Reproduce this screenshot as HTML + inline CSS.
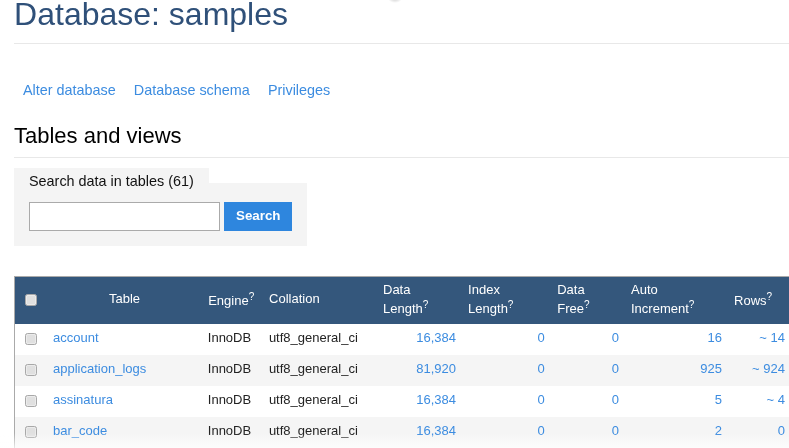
<!DOCTYPE html>
<html><head><meta charset="utf-8">
<style>
html,body{margin:0;padding:0;background:#fff;width:789px;height:448px;overflow:hidden;position:relative;font-family:"Liberation Sans",sans-serif;}
.a{position:absolute;white-space:pre;line-height:normal;}
.t32{font-size:32px;color:#2f5079;}
.lnk{font-size:14.4px;color:#3c8ce0;}
.h3{font-size:22px;color:#000;}
.rule{position:absolute;left:14px;right:0;height:1px;background:#e8e8e8;}
.fs{position:absolute;background:#f4f4f4;}
.th{font-size:13px;color:#fff;}
.td{font-size:13px;color:#222;}
.tl{font-size:13px;color:#3c8ce0;}
.r{text-align:right;}
.sup{font-size:10px;position:relative;top:-5px;}
.cb{position:absolute;width:10px;height:10px;border:1px solid #a8a8a8;border-radius:2.5px;background:#e0e0e0;box-shadow:inset 0 0 0 1px rgba(255,255,255,.35);}
.row{position:absolute;left:15px;right:0;height:31px;}
</style></head><body><div id="wrap" style="position:absolute;left:0;top:0;width:789px;height:448px;will-change:transform">
<div class="a t32" style="left:14.1px;top:-4px">Database: samples</div>
<div class="rule" style="top:43px"></div>

<div class="a lnk" style="left:23px;top:82px">Alter database</div>
<div class="a lnk" style="left:133.8px;top:82px">Database schema</div>
<div class="a lnk" style="left:267.9px;top:82px">Privileges</div>

<div class="a h3" style="left:14px;top:123px">Tables and views</div>
<div class="rule" style="top:157px"></div>

<div class="fs" style="left:14px;top:168px;width:195px;height:15px"></div>
<div class="fs" style="left:14px;top:183px;width:293px;height:63px"></div>
<div class="a lnk" style="left:29px;top:173px;color:#111">Search data in tables (61)</div>
<div style="position:absolute;left:29px;top:202px;width:189px;height:27px;border:1px solid #aaa;background:#fff"></div>
<div style="position:absolute;left:224px;top:202px;width:68px;height:29px;background:#2e86de"></div>
<div class="a" style="left:236px;top:208px;font-size:13.33px;font-weight:bold;color:#fff">Search</div>

<!-- table -->
<div style="position:absolute;left:14px;top:276px;right:0;height:1px;background:#aaa"></div>
<div style="position:absolute;left:14px;top:276px;width:1px;height:172px;background:#aaa"></div>
<div style="position:absolute;left:15px;top:277px;right:0;height:47px;background:#34577c"></div>
<div class="row" style="top:324px;background:#fff"></div>
<div class="row" style="top:355px;background:#f5f5f5"></div>
<div class="row" style="top:386px;background:#fff"></div>
<div class="row" style="top:417px;background:#f5f5f5"></div>

<div class="cb" style="left:25px;top:294px"></div>
<div class="a th" style="left:109px;top:291px">Table</div>
<div class="a th" style="left:208.2px;top:293px">Engine<span class="sup">?</span></div>
<div class="a th" style="left:269.1px;top:291px">Collation</div>
<div class="a th" style="left:383px;top:282px">Data</div>
<div class="a th" style="left:383px;top:301px">Length<span class="sup">?</span></div>
<div class="a th" style="left:468.1px;top:282px">Index</div>
<div class="a th" style="left:468.1px;top:301px">Length<span class="sup">?</span></div>
<div class="a th" style="left:557.2px;top:282px">Data</div>
<div class="a th" style="left:557.2px;top:301px">Free<span class="sup">?</span></div>
<div class="a th" style="left:631px;top:282px">Auto</div>
<div class="a th" style="left:631px;top:301px">Increment<span class="sup">?</span></div>
<div class="a th" style="left:734.1px;top:293px">Rows<span class="sup">?</span></div>

<!-- row 1 -->
<div class="cb" style="left:25px;top:333px"></div>
<div class="a tl" style="left:53px;top:330px">account</div>
<div class="a td" style="left:207.8px;top:330px">InnoDB</div>
<div class="a td" style="left:268.9px;top:330px">utf8_general_ci</div>
<div class="a tl r" style="right:333px;top:330px">16,384</div>
<div class="a tl r" style="right:244.3px;top:330px">0</div>
<div class="a tl r" style="right:170.1px;top:330px">0</div>
<div class="a tl r" style="right:67px;top:330px">16</div>
<div class="a tl r" style="right:4.05px;top:330px">~ 14</div>
<!-- row 2 -->
<div class="cb" style="left:25px;top:364px"></div>
<div class="a tl" style="left:53px;top:361px">application_logs</div>
<div class="a td" style="left:207.8px;top:361px">InnoDB</div>
<div class="a td" style="left:268.9px;top:361px">utf8_general_ci</div>
<div class="a tl r" style="right:333px;top:361px">81,920</div>
<div class="a tl r" style="right:244.3px;top:361px">0</div>
<div class="a tl r" style="right:170.1px;top:361px">0</div>
<div class="a tl r" style="right:67px;top:361px">925</div>
<div class="a tl r" style="right:4.05px;top:361px">~ 924</div>
<!-- row 3 -->
<div class="cb" style="left:25px;top:395px"></div>
<div class="a tl" style="left:53px;top:392px">assinatura</div>
<div class="a td" style="left:207.8px;top:392px">InnoDB</div>
<div class="a td" style="left:268.9px;top:392px">utf8_general_ci</div>
<div class="a tl r" style="right:333px;top:392px">16,384</div>
<div class="a tl r" style="right:244.3px;top:392px">0</div>
<div class="a tl r" style="right:170.1px;top:392px">0</div>
<div class="a tl r" style="right:67px;top:392px">5</div>
<div class="a tl r" style="right:4.05px;top:392px">~ 4</div>
<!-- row 4 -->
<div class="cb" style="left:25px;top:426px"></div>
<div class="a tl" style="left:53px;top:423px">bar_code</div>
<div class="a td" style="left:207.8px;top:423px">InnoDB</div>
<div class="a td" style="left:268.9px;top:423px">utf8_general_ci</div>
<div class="a tl r" style="right:333px;top:423px">16,384</div>
<div class="a tl r" style="right:244.3px;top:423px">0</div>
<div class="a tl r" style="right:170.1px;top:423px">0</div>
<div class="a tl r" style="right:67px;top:423px">2</div>
<div class="a tl r" style="right:4.05px;top:423px">0</div>
<div style="position:absolute;left:0;top:433px;width:789px;height:15px;background:linear-gradient(rgba(255,255,255,0),rgba(255,255,255,.72))"></div>
<div style="position:absolute;left:387.6px;top:-6px;width:14px;height:9px;border-radius:50%;background:radial-gradient(closest-side,rgba(0,0,0,.2),rgba(0,0,0,0))"></div>
</div></body></html>
